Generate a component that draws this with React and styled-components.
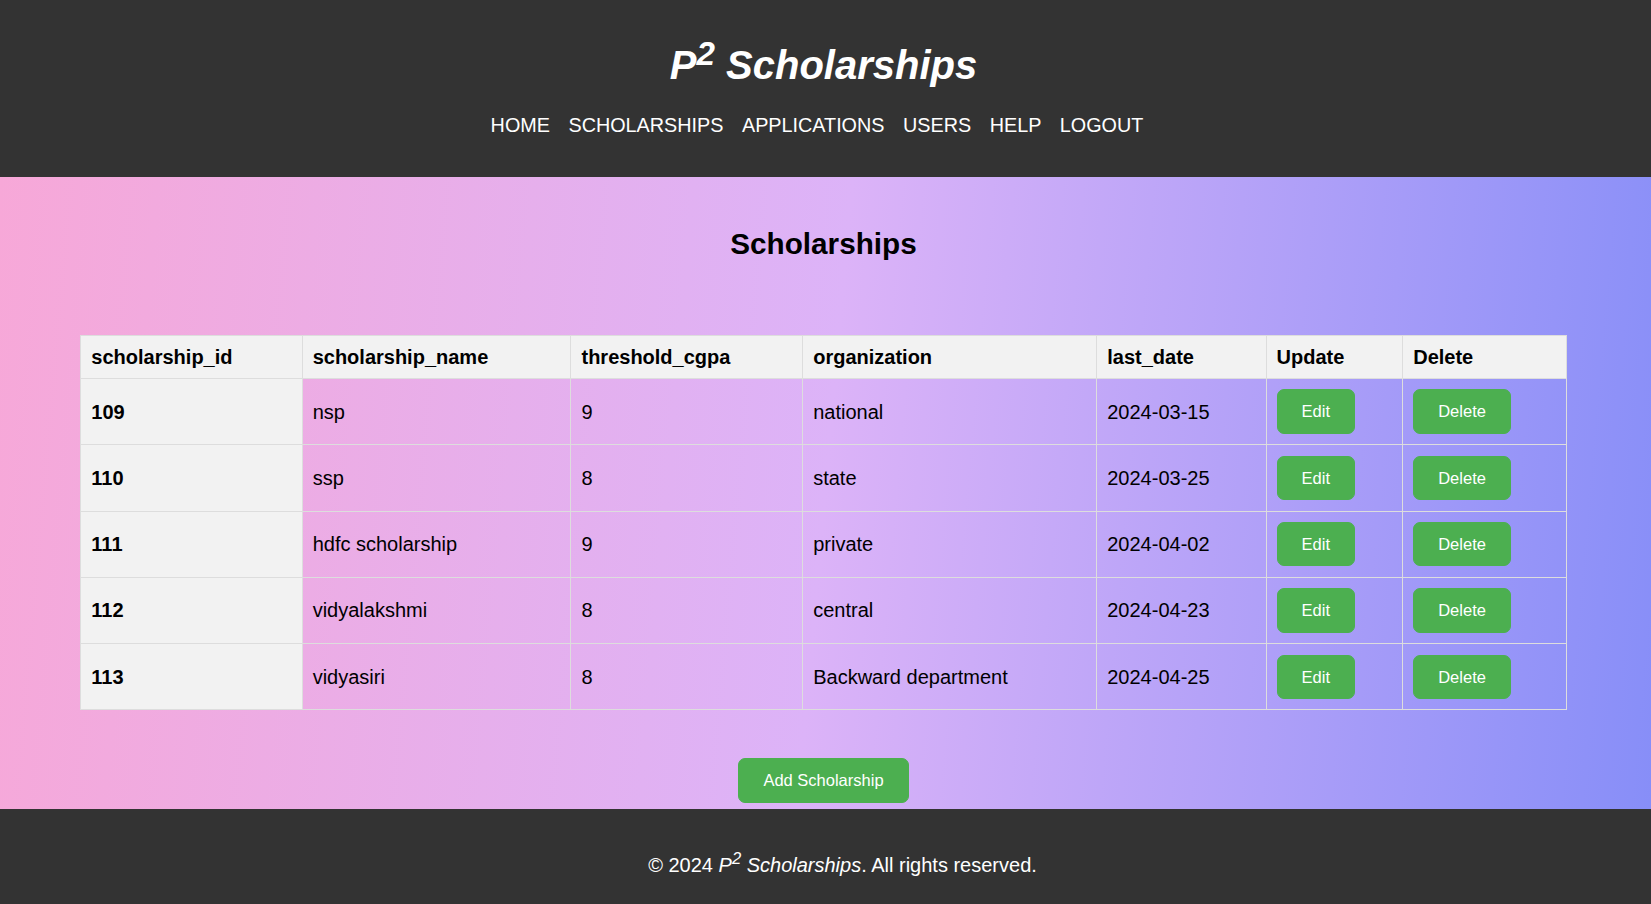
import React from "react";
import styled, { createGlobalStyle } from "styled-components";

const Global = createGlobalStyle`
  html, body { margin: 0; padding: 0; }
  body {
    font-family: "Liberation Sans", Arial, sans-serif;
    color: #000;
  }
`;

const Header = styled.header`
  background: #333;
  color: #fff;
  text-align: center;
  padding: 42px 4px 41px 0;
`;

const Title = styled.h1`
  margin: 0 0 26px;
  font-size: 40px;
  font-style: italic;
  font-weight: bold;
  line-height: 46px;
`;

const Sup = styled.sup`
  font-size: 0.83em;
  line-height: 0;
`;

const Nav = styled.nav`
  display: flex;
  justify-content: center;
  gap: 18.5px;
  padding-right: 13px;
`;

const NavLink = styled.a`
  color: #fff;
  text-decoration: none;
  font-size: 19.8px;
  line-height: 22px;
`;

const Main = styled.main`
  background: linear-gradient(95deg, #f7a8d8 0%, #dcb3f8 50%, #878ef8 100%);
  padding: 50px 4px 6px 0;
  text-align: center;
`;

const Heading = styled.h2`
  margin: 0 0 74px;
  font-size: 29.7px;
  line-height: 34px;
  font-weight: bold;
`;

const Table = styled.table`
  width: calc(90% + 4px);
  margin: 0 auto 48px;
  border-collapse: collapse;
  text-align: left;
  font-size: 20px;
`;

const Th = styled.th`
  width: ${(p) => p.$w};
  background: #f2f2f2;
  border: 1px solid #ddd;
  padding: 10px;
  font-weight: bold;
  line-height: 22px;
`;

const Td = styled.td`
  border: 1px solid #ddd;
  padding: 10.45px 10px;
  line-height: 22px;
  background: ${(p) => (p.$key ? "#f2f2f2" : "transparent")};
  font-weight: ${(p) => (p.$key ? "bold" : "normal")};
`;

const Button = styled.button`
  background: #4caf50;
  color: #fff;
  border: 1px solid #4caf50;
  border-radius: 7px;
  padding: 12px 24px;
  font-family: "Liberation Sans", Arial, sans-serif;
  font-size: 16.5px;
  line-height: 18.4px;
  cursor: pointer;
  vertical-align: middle;
`;

const Footer = styled.footer`
  background: #333;
  color: #fff;
  text-align: center;
  padding: 45px 0 43px 34px;
  font-size: 20px;
  line-height: 23px;
`;

const columns = [
  ["scholarship_id", "14.9%"],
  ["scholarship_name", "18.1%"],
  ["threshold_cgpa", "15.6%"],
  ["organization", "19.8%"],
  ["last_date", "11.4%"],
  ["Update", "9.2%"],
  ["Delete", "11%"],
];

const rows = [
  [109, "nsp", 9, "national", "2024-03-15"],
  [110, "ssp", 8, "state", "2024-03-25"],
  [111, "hdfc scholarship", 9, "private", "2024-04-02"],
  [112, "vidyalakshmi", 8, "central", "2024-04-23"],
  [113, "vidyasiri", 8, "Backward department", "2024-04-25"],
];

const links = ["HOME", "SCHOLARSHIPS", "APPLICATIONS", "USERS", "HELP", "LOGOUT"];

export default function App() {
  return (
    <>
      <Global />
      <Header>
        <Title>
          P<Sup>2</Sup> Scholarships
        </Title>
        <Nav>
          {links.map((l) => (
            <NavLink key={l} href="#">
              {l}
            </NavLink>
          ))}
        </Nav>
      </Header>
      <Main>
        <Heading>Scholarships</Heading>
        <Table>
          <thead>
            <tr>
              {columns.map(([c, w]) => (
                <Th key={c} $w={w}>
                  {c}
                </Th>
              ))}
            </tr>
          </thead>
          <tbody>
            {rows.map((r) => (
              <tr key={r[0]}>
                <Td $key>{r[0]}</Td>
                <Td>{r[1]}</Td>
                <Td>{r[2]}</Td>
                <Td>{r[3]}</Td>
                <Td>{r[4]}</Td>
                <Td>
                  <Button>Edit</Button>
                </Td>
                <Td>
                  <Button>Delete</Button>
                </Td>
              </tr>
            ))}
          </tbody>
        </Table>
        <Button>Add Scholarship</Button>
      </Main>
      <Footer>
        © 2024{" "}
        <i>
          P<Sup>2</Sup> Scholarships
        </i>
        . All rights reserved.
      </Footer>
    </>
  );
}
